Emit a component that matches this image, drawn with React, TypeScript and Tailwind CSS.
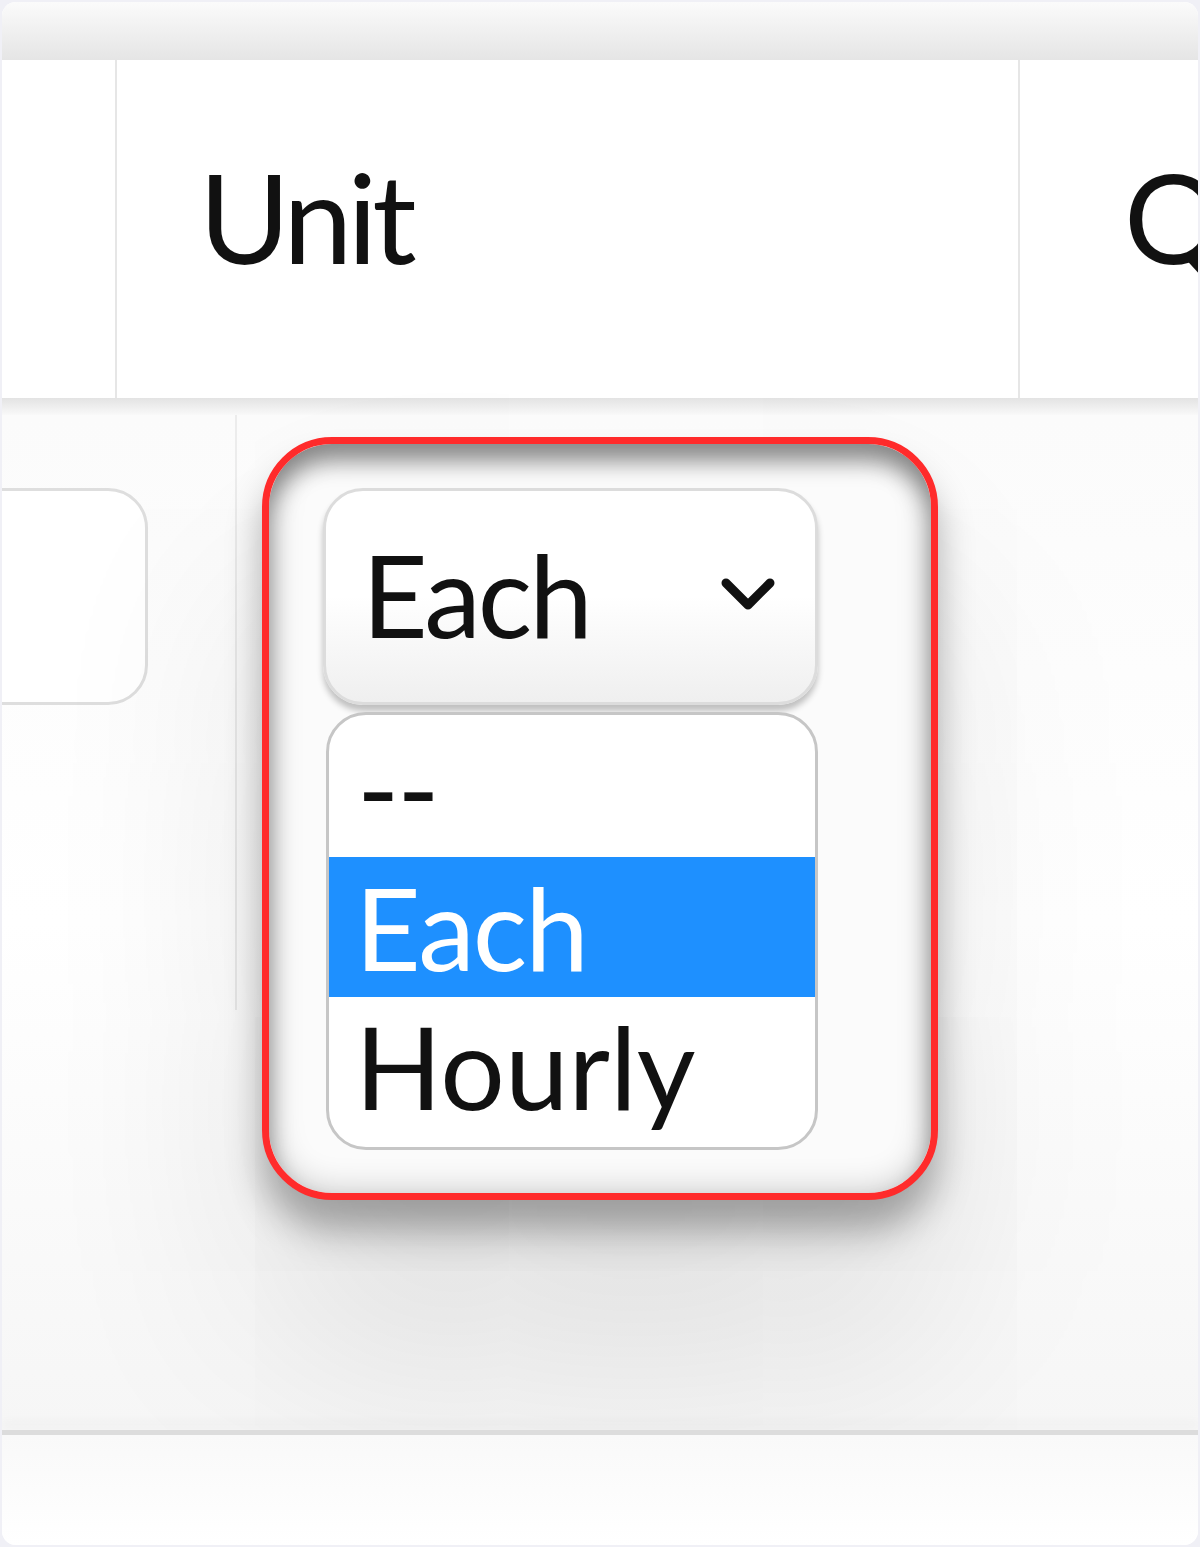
import React from "react";

const lato = { fontFamily: "Lato, 'Open Sans', sans-serif" };

function Chevron() {
  return (
    <svg width="58" height="40" viewBox="0 0 58 40" className="shrink-0 -mt-[6px]">
      <polyline points="7,9 29,31 51,9" fill="none" stroke="#111" strokeWidth="9" strokeLinecap="round" strokeLinejoin="round" />
    </svg>
  );
}

export default function App() {
  return (
    <div className="w-[1200px] h-[1547px] bg-[#f0f0f6] p-[2px]" style={lato}>
      <div className="h-full bg-white rounded-[14px] overflow-hidden flex flex-col">
        {/* top shade */}
        <div className="h-[58px] shrink-0 bg-gradient-to-b from-[#fbfbfb] to-[#e5e5e5]" />

        {/* header row */}
        <div className="h-[338px] shrink-0 flex bg-white">
          <div className="w-[115px] border-r-2 border-[#e6e6e6]" />
          <div className="w-[903px] border-r-2 border-[#e6e6e6] flex items-center pl-[82px]">
            <span className="text-[124px] leading-none tracking-[-5px] text-[#111] -mt-[26px]">Unit</span>
          </div>
          <div className="flex-1 overflow-hidden flex items-center pl-[104px]">
            <span className="text-[124px] leading-none text-[#111] -mt-[26px]">Q</span>
          </div>
        </div>

        {/* header bottom shade */}
        <div className="h-[17px] shrink-0 bg-gradient-to-b from-[#e3e3e3] to-[#f9f9f9]" />

        {/* body row */}
        <div className="h-[1015px] shrink-0 flex items-start bg-gradient-to-b from-[#fbfbfb] via-white to-[#f6f6f6]">
          <div className="w-[235px] h-[595px] border-r-2 border-[#ececec] shrink-0 overflow-hidden">
            <div className="-ml-[40px] mt-[73px] w-[186px] h-[217px] rounded-[40px] border-[3px] border-[#dedede] bg-white" />
          </div>

          <div className="ml-[25px] mt-[22px] w-[676px] h-[763px] shrink-0 rounded-[70px] border-[7px] border-[#ff2b2b] bg-[#fbfbfb] shadow-[inset_0_18px_22px_rgba(0,0,0,0.38),inset_0_0_34px_rgba(0,0,0,0.22),0_30px_36px_rgba(0,0,0,0.3),0_140px_220px_rgba(0,0,0,0.12)] pt-[44px] pl-[54px] flex flex-col">
            <div className="w-[495px] h-[217px] rounded-[40px] border-[3px] border-[#dcdcdc] bg-gradient-to-b from-white via-white to-[#efefef] flex items-center justify-between pl-[36px] pr-[38px] shadow-[0_6px_6px_rgba(0,0,0,0.24)]">
              <span className="text-[114px] leading-none tracking-[-3px] text-[#111] -mt-[6px]">Each</span>
              <Chevron />
            </div>

            <div className="mt-[7px] ml-[3px] w-[492px] h-[438px] rounded-[40px] border-[3px] border-[#c6c6c6] bg-white overflow-hidden flex flex-col">
              <div className="h-[142px] flex items-center pl-[28px]">
                <span className="text-[114px] leading-none tracking-[-2px] text-[#111] mt-[2px]">--</span>
              </div>
              <div className="h-[140px] bg-[#1e90ff] flex items-center pl-[26px]">
                <span className="text-[114px] leading-none tracking-[-2px] text-white">Each</span>
              </div>
              <div className="flex-1 flex items-center pl-[26px]">
                <span className="text-[114px] leading-none text-[#111] -mt-[12px]">Hourly</span>
              </div>
            </div>
          </div>
        </div>

        {/* bottom line */}
        <div className="h-[5px] shrink-0 bg-[#dcdcdc] shadow-[0_-8px_10px_rgba(0,0,0,0.04)]" />
        <div className="flex-1 bg-gradient-to-b from-[#f9f9f9] to-white" />
      </div>
    </div>
  );
}
